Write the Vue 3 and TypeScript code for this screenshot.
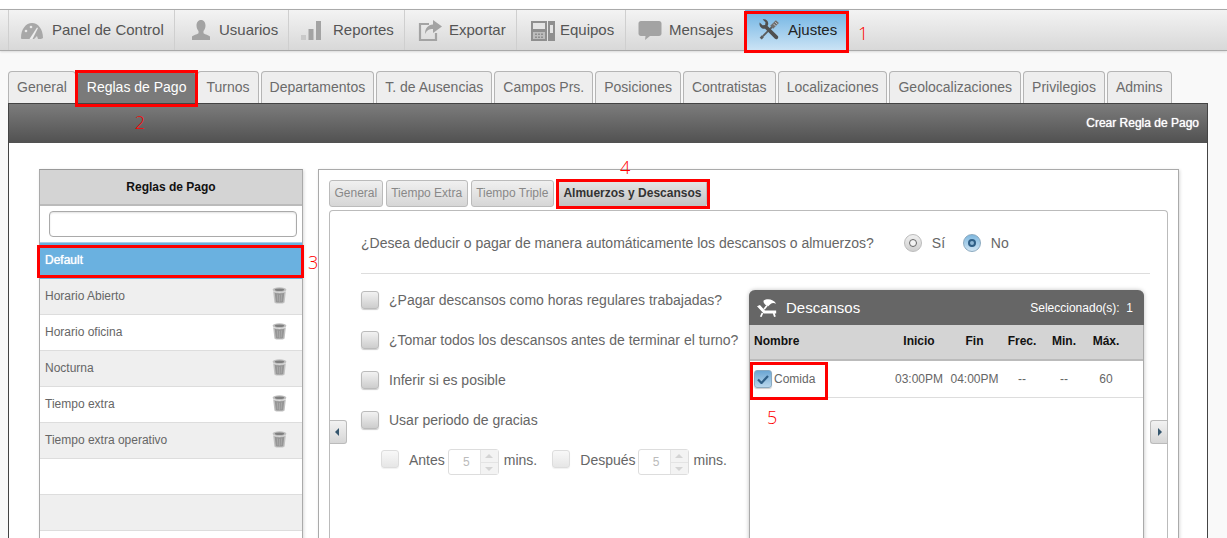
<script setup lang="ts">
interface NavItem {
  label: string;
  icon: string;
  active?: boolean;
}

const navItems: NavItem[] = [
  { label: 'Panel de Control', icon: 'gauge' },
  { label: 'Usuarios', icon: 'user' },
  { label: 'Reportes', icon: 'bars' },
  { label: 'Exportar', icon: 'export' },
  { label: 'Equipos', icon: 'device' },
  { label: 'Mensajes', icon: 'chat' },
  { label: 'Ajustes', icon: 'tools', active: true },
];

const tabs = [
  'General',
  'Reglas de Pago',
  'Turnos',
  'Departamentos',
  'T. de Ausencias',
  'Campos Prs.',
  'Posiciones',
  'Contratistas',
  'Localizaciones',
  'Geolocalizaciones',
  'Privilegios',
  'Admins',
];

const rules = ['Horario Abierto', 'Horario oficina', 'Nocturna', 'Tiempo extra', 'Tiempo extra operativo', '', '', ''];
const subTabs = ['General', 'Tiempo Extra', 'Tiempo Triple'];
const options = [
  '¿Pagar descansos como horas regulares trabajadas?',
  '¿Tomar todos los descansos antes de terminar el turno?',
  'Inferir si es posible',
  'Usar periodo de gracias',
];
const columns = ['Inicio', 'Fin', 'Frec.', 'Min.', 'Máx.'];
const values = ['03:00PM', '04:00PM', '--', '--', '60'];
</script>

<template>
  <div class="page">
    <nav class="nav">
      <a
        v-for="item in navItems"
        :key="item.label"
        class="nav__item"
        :class="[`nav__item--${item.icon}`, { 'nav__item--active': item.active }]"
      >
        <svg class="nav__icon" viewBox="0 0 24 24" aria-hidden="true">
          <template v-if="item.icon === 'gauge'">
            <path d="M1 20C1 11 6 5 12 5s11 6 11 15c-1 1-3 1-5 1l-1-3-3 3H3c-1 0-2 0-2-1z" fill="#a8a8a8" />
            <path d="M9.500 21 17 9.500l1 .6L12.500 21z" fill="#eee" />
            <circle cx="6" cy="13" r="1.300" fill="#e8e8e8" />
            <circle cx="11" cy="9" r="1.300" fill="#e8e8e8" />
          </template>
          <path
            v-else-if="item.icon === 'user'"
            d="M12 2c3 0 4.500 2.500 4.500 5.500 0 2.500-1 4.500-2 5.500v2c0 1 5 2 6.500 3.500V22H3v-3.500C4.500 17 9.500 16 9.500 15v-2c-1-1-2-3-2-5.500C7.500 4.500 9 2 12 2z"
            fill="#a3a3a3"
          />
          <template v-else-if="item.icon === 'bars'">
            <path d="M2 17h5v5H2z" fill="#c9c9c9" />
            <path d="M9.500 11h5v11h-5z" fill="#a3a3a3" />
            <path d="M17 3h5v19h-5z" fill="#a3a3a3" />
          </template>
          <template v-else-if="item.icon === 'export'">
            <path d="M11 6H2v16h16v-7" fill="none" stroke="#a3a3a3" stroke-width="2.200" />
            <path d="M15 2l9 6.500-9 6.500v-4c-4 0-6 1-8 5 0-6 3-9 8-9.500z" fill="#a3a3a3" />
          </template>
          <template v-else-if="item.icon === 'device'">
            <path d="M0 3h16v20H0z" fill="#8f8f8f" />
            <path d="M2 5h12v6H2z" fill="#e4e4e4" />
            <path d="M2 14h12v7H2z" fill="#bdbdbd" />
            <path d="M4 15.500h2v1.500H4zM7 15.500h2v1.500H7zM10 15.500h2v1.500h-2zM4 18.500h2V20H4zM7 18.500h2V20H7zM10 18.500h2V20h-2z" fill="#8f8f8f" />
            <path d="M17 3h7v20h-7z" fill="#8f8f8f" />
            <path d="M19 7h3v8h-3z" fill="#e4e4e4" />
          </template>
          <path
            v-else-if="item.icon === 'chat'"
            d="M3 3h18c1.500 0 2.500 1 2.500 2.500v10c0 1.500-1 2.500-2.500 2.500h-9l-5 4 .5-4H3c-1.500 0-2.500-1-2.500-2.500v-10C.5 4 1.500 3 3 3z"
            fill="#a3a3a3"
          />
          <template v-else>
            <!-- screwdriver, top right to bottom left -->
            <path d="M15 9 4.500 19.500" stroke="#5c5c5c" stroke-width="2.200" />
            <path d="M4.500 19.500 2 22.500" stroke="#5c5c5c" stroke-width="3.200" />
            <path d="M14.500 9.500 21 3" stroke="#6e6e6e" stroke-width="4.800" />
            <path d="M16.500 5.500l2.500 2.500M18.500 3.500 21 6" stroke="#d3dde6" stroke-width=".9" />
            <!-- wrench, top left to bottom right -->
            <path
              d="M.8 4 4 7.200 7 6.800 7.400 3.800 4.200.6C7.500-.5 11 2 10.500 6L9.800 8 21.500 19.500a2.300 2.300 0 0 1-3.200 3.200L7 11C3.500 12-.5 8 .8 4z"
              fill="#505050"
            />
          </template>
        </svg>
        <span class="nav__label">{{ item.label }}</span>
        <template v-if="item.active">
          <i class="redbox redbox--nav"></i>
          <b class="note note--one">1</b>
        </template>
      </a>
    </nav>

    <div class="tabs">
      <a v-for="(tab, index) in tabs" :key="tab" class="tab" :class="{ 'tab--active': index === 1 }">
        {{ tab }}
        <template v-if="index === 1">
          <i class="redbox redbox--tab"></i>
          <b class="note note--two">2</b>
        </template>
      </a>
    </div>

    <section class="sheet">
      <header class="sheet__bar">Crear Regla de Pago</header>

      <div class="sheet__body">
        <aside class="rules">
          <h3 class="rules__title">Reglas de Pago</h3>
          <div class="rules__search"><input class="rules__input" type="text" /></div>
          <div class="rule rule--active">
            Default
            <i class="redbox redbox--rule"></i>
            <b class="note note--three">3</b>
          </div>
          <div v-for="(rule, index) in rules" :key="index" class="rule" :class="{ 'rule--odd': index % 2 === 0 }">
            <span>{{ rule }}</span>
            <svg v-if="rule" class="rule__trash" viewBox="0 0 14 16" aria-hidden="true">
              <ellipse cx="7" cy="2.500" rx="6.500" ry="2.300" fill="#c0c0c0" />
              <ellipse cx="7" cy="2.500" rx="4.500" ry="1.200" fill="#808080" />
              <path d="M1 4c2 1.500 10 1.500 12 0l-1.200 10.500c-1 1.500-8.600 1.500-9.600 0z" fill="#c2c2c2" />
              <path d="M2.500 5.500c2 .8 7 .8 9 0l-1 8.500c-1 .8-6 .8-7 0z" fill="#969696" />
              <path d="M5 7l.4 6.500M7 7.500V14M9 7l-.4 6.500" stroke="#b0b0b0" stroke-width=".7" />
            </svg>
          </div>
        </aside>

        <div class="detail">
          <div class="subtabs">
            <a v-for="tab in subTabs" :key="tab" class="subtab">{{ tab }}</a>
            <a class="subtab subtab--active">
              Almuerzos y Descansos
              <i class="redbox redbox--subtab"></i>
              <b class="note note--four">4</b>
            </a>
          </div>

          <div class="pane">
            <button class="pager pager--prev" type="button" aria-label="Anterior"></button>
            <button class="pager pager--next" type="button" aria-label="Siguiente"></button>

            <div class="question">
              <span class="question__text">¿Desea deducir o pagar de manera automáticamente los descansos o almuerzos?</span>
              <span class="radio"></span>
              <span class="radio__label">Sí</span>
              <span class="radio radio--on"></span>
              <span class="radio__label">No</span>
            </div>

            <div class="columns">
              <div class="options">
                <label v-for="option in options" :key="option" class="option">
                  <span class="check"></span>
                  <span>{{ option }}</span>
                </label>
                <div class="grace">
                  <span class="check check--off"></span>
                  <span class="grace__label">Antes</span>
                  <span class="spin">
                    <span class="spin__value">5</span>
                    <span class="spin__arrows"><i class="spin__up"></i><i class="spin__down"></i></span>
                  </span>
                  <span class="grace__unit">mins.</span>
                  <span class="check check--off"></span>
                  <span class="grace__label">Después</span>
                  <span class="spin spin--tight">
                    <span class="spin__value">5</span>
                    <span class="spin__arrows"><i class="spin__up"></i><i class="spin__down"></i></span>
                  </span>
                  <span class="grace__unit">mins.</span>
                </div>
              </div>

              <div class="breaks">
                <header class="breaks__head">
                  <svg class="breaks__icon" viewBox="0 0 24 22" aria-hidden="true">
                    <path d="M8 2C12-1 20 0 23 6c-3-1.500-5-1-7 .5l-2.500 2.500L10 7C8 5 7.500 3.500 8 2z" fill="#fff" />
                    <path d="M12 8 8.500 12.500" stroke="#fff" stroke-width="2" />
                    <path d="M0 9l3.500-1.500L9.500 14H23v3.500H8z" fill="#fff" />
                    <path d="M6.500 17 4.500 21.500M20 17l1.500 4.500" stroke="#fff" stroke-width="2.200" />
                  </svg>
                  <span class="breaks__title">Descansos</span>
                  <span class="breaks__count">Seleccionado(s):&nbsp; 1</span>
                </header>
                <div class="breaks__grid breaks__grid--head">
                  <span class="breaks__name">Nombre</span>
                  <span v-for="column in columns" :key="column">{{ column }}</span>
                </div>
                <div class="breaks__grid breaks__grid--row">
                  <span class="breaks__name breaks__name--row">
                    <span class="check check--on">
                      <svg viewBox="0 0 12 10" aria-hidden="true">
                        <path d="M1 5.500 4.500 9 11 2" fill="none" stroke="#2f5f86" stroke-width="2.200" />
                      </svg>
                    </span>
                    Comida
                  </span>
                  <span v-for="(value, index) in values" :key="index">{{ value }}</span>
                  <i class="redbox redbox--break"></i>
                  <b class="note note--five">5</b>
                </div>
              </div>
            </div>
          </div>
        </div>
      </div>
    </section>
  </div>
</template>

<style>
html,
body {
  margin: 0;
  background: #f9f9f9;
}
</style>

<style scoped>
.page {
  height: 538px;
  overflow: hidden;
  padding-top: 9px;
  box-sizing: border-box;
  font-family: "Liberation Sans", Arial, sans-serif;
  color: #666;
  background: linear-gradient(#fff 9px, #f9f9f9 9px);
}

.nav {
  display: flex;
  height: 42px;
  padding-left: 8px;
  box-sizing: border-box;
  border-top: 1px solid #aaa;
  border-bottom: 1px solid #aaa;
  background: linear-gradient(#f3f3f3, #d8d8d8);
  box-shadow: 0 1px 2px rgba(0, 0, 0, 0.12);
}

.nav__item {
  position: relative;
  display: flex;
  align-items: center;
  height: 40px;
  box-sizing: border-box;
  border-left: 1px solid #cfcfcf;
  font-size: 15px;
  color: #555;
  white-space: nowrap;
}

.nav__icon {
  flex: none;
  width: 24px;
  height: 24px;
}

.nav__label {
  padding-bottom: 2px;
}

.nav__item--gauge { width: 166px; padding-left: 11px; gap: 8px; }
.nav__item--user { width: 114px; padding-left: 14px; gap: 6px; }
.nav__item--bars { width: 116px; padding-left: 10px; gap: 10px; }
.nav__item--export { width: 112px; padding-left: 13px; gap: 7px; }
.nav__item--device { width: 109px; padding-left: 14px; gap: 5px; }
.nav__item--chat { width: 119px; padding-left: 12px; gap: 7px; }
.nav__item--tools { width: 104px; padding-left: 14px; gap: 8px; }

.nav__item--tools {
  border-left: 0;
  margin-left: 1px;
  color: #222;
  background: linear-gradient(#6eb3e3, #cbe3f5);
}

.nav__item--tools .nav__icon {
  width: 21px;
  height: 21px;
  margin-bottom: 2px;
}

.redbox {
  position: absolute;
  z-index: 5;
  border: 3px solid #f00;
  pointer-events: none;
}

.redbox--nav { left: -1px; right: 0; top: 1px; bottom: -3px; }
.redbox--tab { left: -4px; right: -4px; top: -2px; bottom: -4px; }
.redbox--rule { left: -3px; right: -2px; top: 2px; bottom: 1px; }
.redbox--subtab { left: -3px; right: -4px; top: -2px; bottom: -3px; }
.redbox--break { left: 0; top: 1px; width: 72px; height: 32px; }

.note {
  position: absolute;
  z-index: 5;
  font-family: "Open Sans", sans-serif;
  font-size: 18px;
  font-weight: 300;
  line-height: 20px;
  color: #f00;
}

.note--one { left: 113px; top: 13px; }
.note--two { left: 56px; top: 40px; }
.note--three { left: 268px; top: 9px; }
.note--four { left: 61px; top: -24px; }
.note--five { left: 17px; top: 46px; }

.tabs {
  display: flex;
  gap: 2px;
  margin: 20px 0 0 8px;
  height: 32px;
}

.tab {
  position: relative;
  display: flex;
  align-items: center;
  padding: 0 8px 1px;
  border: 1px solid #b5b5b5;
  border-bottom: 0;
  border-radius: 4px 4px 0 0;
  background: #eee;
  font-size: 14px;
  color: #6b6b6b;
  white-space: nowrap;
}

.tab--active {
  border-color: #7a7a7a;
  background: #7a7a7a;
  color: #fff;
}

.sheet {
  width: 1200px;
  margin-left: 8px;
  box-sizing: border-box;
  border: 1px solid #444;
  border-bottom: 0;
  background: #fff;
}

.sheet__bar {
  height: 39px;
  padding-right: 8px;
  box-sizing: border-box;
  background: linear-gradient(#7c7c7c, #515151);
  color: #fff;
  font-size: 12px;
  font-weight: 400;
  line-height: 38px;
  text-align: right;
  text-shadow: 0 0 1px #fff;
}

.sheet__body {
  display: flex;
  align-items: flex-start;
  gap: 15px;
  padding: 26px 28px 0 30px;
  background: #fff;
}

.rules {
  flex: none;
  width: 264px;
  box-sizing: border-box;
  border: 1px solid #aaa;
  border-bottom: 0;
  border-top-color: #999;
  box-shadow: 1px 1px 3px rgba(0, 0, 0, 0.15);
}

.rules__title {
  height: 34px;
  margin: 0;
  border-bottom: 2px solid #bbb;
  background: #d4d4d4;
  color: #111;
  font-size: 12px;
  font-weight: 700;
  line-height: 35px;
  text-align: center;
}

.rules__search {
  height: 37px;
  padding: 5px 5px 0 9px;
  box-sizing: border-box;
  border-bottom: 1px solid #a9cde8;
}

.rules__input {
  display: block;
  width: 100%;
  height: 26px;
  box-sizing: border-box;
  border: 1px solid #aaa;
  border-radius: 4px;
  box-shadow: inset 0 1px 2px rgba(0, 0, 0, 0.12);
  background: #fff;
}

.rule {
  position: relative;
  display: flex;
  align-items: center;
  justify-content: space-between;
  height: 36px;
  padding: 0 15px 2px 5px;
  box-sizing: border-box;
  border-bottom: 1px solid #ddd;
  background: #fff;
  font-size: 12px;
  color: #666;
}

.rule--odd {
  background: #efefef;
}

.rule--active {
  padding-bottom: 3px;
  border-bottom: 0;
  background: #6ab1e0;
  color: #fff;
  text-shadow: 0 0 1px #fff;
}

.rule__trash {
  width: 15px;
  height: 17px;
}

.detail {
  position: relative;
  flex: 1;
  height: 400px;
  padding: 10px 10px 0;
  box-sizing: border-box;
  border: 1px solid #aaa;
  border-bottom: 0;
  box-shadow: 1px 1px 3px rgba(0, 0, 0, 0.15);
}

.subtabs {
  display: flex;
  gap: 3px;
  height: 27px;
}

.subtab {
  position: relative;
  display: flex;
  align-items: center;
  padding: 0 4.500px 2px;
  border: 1px solid #bbb;
  border-radius: 3px;
  background: linear-gradient(#f0f0f0, #d6d6d6);
  font-size: 12px;
  color: #888;
  white-space: nowrap;
}

.subtab--active {
  margin-left: 1px;
  background: linear-gradient(#e6e6e6, #c2c2c2);
  color: #333;
  font-weight: 700;
}

.pane {
  position: relative;
  height: 360px;
  margin-top: 3px;
  padding: 0 16px 0 31px;
  box-sizing: border-box;
  border: 1px solid #bbb;
  border-bottom: 0;
  border-radius: 4px 4px 0 0;
  font-size: 14px;
  color: #666;
}

.pager {
  position: absolute;
  top: 209px;
  width: 17px;
  height: 24px;
  padding: 0;
  border: 1px solid #bbb;
  background: linear-gradient(#f2f2f2, #d6d6d6);
}

.pager::after {
  content: "";
  position: absolute;
  top: 7px;
  border: 4px solid transparent;
}

.pager--prev {
  left: 0;
  border-left: 0;
  border-radius: 0 3px 3px 0;
}

.pager--prev::after {
  left: 1px;
  border-right-color: #35566e;
}

.pager--next {
  right: 0;
  border-right: 0;
  border-radius: 3px 0 0 3px;
}

.pager--next::after {
  left: 7px;
  border-left-color: #35566e;
}

.question {
  display: flex;
  align-items: center;
  height: 63px;
  padding-top: 2px;
  box-sizing: border-box;
  margin-right: 1px;
  border-bottom: 1px solid #ddd;
}

.question__text {
  margin-right: 30px;
}

.radio {
  position: relative;
  width: 18px;
  height: 18px;
  box-sizing: border-box;
  border: 1px solid #bbb;
  border-radius: 50%;
  background: linear-gradient(#f0f0f0, #cfcfcf);
}

.radio::after {
  content: "";
  position: absolute;
  left: 4px;
  top: 4px;
  width: 6px;
  height: 6px;
  border: 1px solid #666;
  border-radius: 50%;
  background: #f4f4f4;
}

.radio--on {
  border-color: #8aa9bf;
  background: linear-gradient(#7fb8df, #cfe4f3);
}

.radio--on::after {
  width: 4px;
  height: 4px;
  border: 2px solid #2f5f86;
  background: #8fb8d6;
}

.radio__label {
  width: 31px;
  margin-left: 10px;
}

.columns {
  display: flex;
  justify-content: space-between;
  padding-top: 16px;
}

.options {
  display: flex;
  flex-direction: column;
  gap: 22px;
  padding-top: 1px;
}

.option {
  display: flex;
  align-items: center;
  gap: 10px;
  height: 18px;
  white-space: nowrap;
}

.check {
  flex: none;
  display: block;
  width: 18px;
  height: 18px;
  box-sizing: border-box;
  border: 1px solid #bbb;
  border-radius: 3px;
  background: linear-gradient(#f2f2f2, #cdcdcd);
  box-shadow: 0 1px 1px rgba(0, 0, 0, 0.2);
}

.check--off {
  margin-bottom: 6px;
  border-color: #ddd;
  background: linear-gradient(#f8f8f8, #e6e6e6);
  box-shadow: 0 1px 1px rgba(0, 0, 0, 0.06);
}

.check--on {
  display: flex;
  align-items: center;
  justify-content: center;
  border-color: #8aa9bf;
  background: linear-gradient(#6ba6d3, #b9d7ec);
}

.check--on svg {
  width: 12px;
  height: 10px;
}

.grace {
  display: flex;
  align-items: center;
  height: 26px;
  margin-top: -2px;
  padding-left: 20px;
  white-space: nowrap;
}

.grace__label {
  margin-left: 10px;
  padding-bottom: 4px;
}

.grace__unit {
  margin: 0 15px 0 5px;
  padding-bottom: 4px;
}

.spin {
  display: flex;
  width: 51px;
  height: 26px;
  margin-left: 3px;
  box-sizing: border-box;
  border: 1px solid #ddd;
  border-radius: 3px;
}

.spin--tight {
  margin-left: 2px;
}

.spin__value {
  flex: 1;
  padding-left: 4px;
  color: #bbb;
  font-size: 12px;
  line-height: 24px;
  text-align: center;
}

.spin__arrows {
  display: flex;
  flex-direction: column;
  width: 17px;
  border-left: 1px solid #e4e4e4;
}

.spin__up,
.spin__down {
  position: relative;
  flex: 1;
  background: #f3f3f3;
}

.spin__up {
  border-bottom: 1px solid #e4e4e4;
}

.spin__up::after,
.spin__down::after {
  content: "";
  position: absolute;
  left: 4px;
  top: 3px;
  border: 4px solid transparent;
}

.spin__up::after {
  top: 0;
  border-bottom-color: #d4d4d4;
}

.spin__down::after {
  top: 4px;
  border-top-color: #d4d4d4;
}

.breaks {
  flex: none;
  width: 395px;
  height: 270px;
  margin-right: 7px;
  box-sizing: border-box;
  border: 1px solid #aaa;
  border-top: 0;
  border-radius: 6px 6px 0 0;
  box-shadow: 0 0 4px rgba(0, 0, 0, 0.25);
}

.breaks__head {
  display: flex;
  align-items: center;
  height: 35px;
  margin: 0 -1px;
  padding: 0 11px 0 8px;
  border-radius: 6px 6px 0 0;
  background: #666;
  color: #fff;
}

.breaks__icon {
  width: 20px;
  height: 20px;
}

.breaks__title {
  margin-left: 9px;
  font-size: 15px;
}

.breaks__count {
  margin-left: auto;
  font-size: 12px;
}

.breaks__grid {
  position: relative;
  display: grid;
  grid-template-columns: 143px 52px 59px 36px 48px 36px;
  align-items: center;
  height: 36px;
  box-sizing: border-box;
  font-size: 12px;
  text-align: center;
}

.breaks__grid--head {
  padding-bottom: 2px;
  border-bottom: 2px solid #bbb;
  background: #d4d4d4;
  color: #111;
  font-weight: 700;
}

.breaks__grid--row {
  height: 37px;
  border-bottom: 1px solid #ddd;
  color: #666;
}

.breaks__name {
  padding-left: 4px;
  text-align: left;
}

.breaks__name--row {
  display: flex;
  align-items: center;
  gap: 2px;
}
</style>
